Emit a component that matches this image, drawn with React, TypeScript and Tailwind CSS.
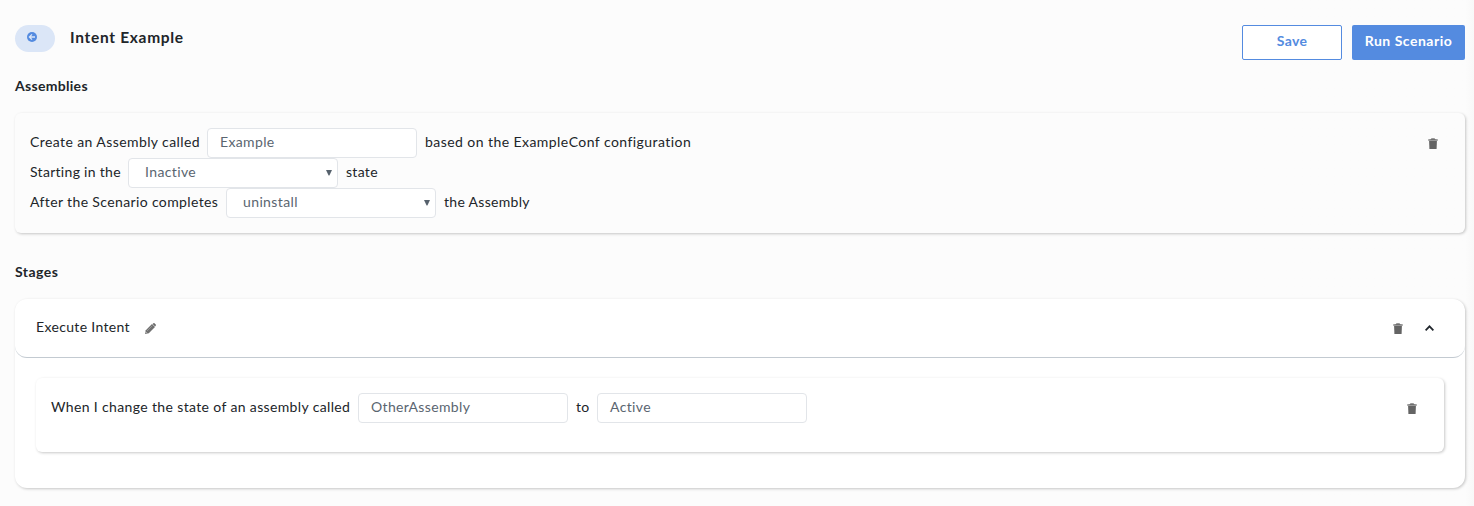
import React from "react";

function Trash() {
  return (
    <svg width="10" height="11" viewBox="0 0 10 11" className="block shrink-0">
      <path d="M3.2 0.2h3.6v1H3.2z" fill="#808080" />
      <path d="M0.3 1h9.4v2H0.3z" fill="#999999" />
      <path d="M2.5 1h5v.8h-5z" fill="#666666" />
      <path d="M1.1 3h7.8l-.3 8H1.4z" fill="#646464" />
    </svg>
  );
}

function Field({ value }: { value: string }) {
  return (
    <div className="mx-2 flex h-[30px] w-[210px] shrink-0 items-center rounded-[4px] border border-[#e2e5e9] bg-white px-3 pb-[3px] tracking-[0.36px] text-[#5a6570]">
      {value}
    </div>
  );
}

function Select({ value }: { value: string }) {
  return (
    <div className="mx-2 flex h-[30px] w-[210px] shrink-0 items-center justify-between rounded-[4px] border border-[#e2e5e9] bg-white pr-[5px] pl-4 text-[#5a6570]">
      <span className="pb-[3px] tracking-[0.38px]">{value}</span>
      <svg width="6" height="6" viewBox="0 0 6 6">
        <path d="M0 0h6L3.4 5.5h-.8z" fill="#56616c" />
      </svg>
    </div>
  );
}

export default function App() {
  return (
    <div className="h-[506px] w-full bg-[#fcfcfc] bg-linear-to-r from-[#fcfcfc] from-[99.4%] to-[#f8f8f8] font-['Lato',sans-serif] text-[14px] leading-5 tracking-[0.3px] text-[#212529]">
      <main className="pt-[25px] pr-[9px] pl-[15px]">
        <header className="flex h-[35px] items-start">
          <button className="flex h-[27px] w-10 items-center rounded-full bg-[#dbe6f7] pb-[3px] pl-3">
            <svg width="10" height="10" viewBox="0 0 10 10">
              <circle cx="5" cy="5" r="5" fill="#548be0" />
              <path d="M8 5H2.5M5 2.4L2.4 5L5 7.6" fill="none" stroke="#dbe6f7" strokeWidth="1.3" />
            </svg>
          </button>
          <h1 className="ml-[15px] pt-[2px] text-[15.5px] font-bold tracking-[0.7px] whitespace-nowrap">Intent Example</h1>
          <div className="ml-auto flex gap-[10px] font-bold">
            <button className="h-[35px] w-[100px] rounded-[2px] border border-[#548be0] bg-white pb-[4px] text-[#548be0]">Save</button>
            <button className="h-[35px] w-[113px] rounded-[2px] bg-[#548be0] pb-[4px] tracking-[0.5px] whitespace-nowrap text-white">Run Scenario</button>
          </div>
        </header>
        <h2 className="mt-4 h-5 text-[14px] font-bold">Assemblies</h2>
        <section className="mt-[17px] flex h-[120px] justify-between rounded-[6px] px-[15px] pt-[15px] shadow-[1px_1px_3px_rgba(0,0,0,0.22)]">
          <div className="whitespace-nowrap">
            <div className="flex h-[30px] items-center">
              <span className="w-[169px] pb-[3px] tracking-[0.41px]">Create an Assembly called</span>
              <Field value="Example" />
              <span className="pb-[3px] tracking-[0.44px]">based on the ExampleConf configuration</span>
            </div>
            <div className="flex h-[30px] items-center">
              <span className="w-[90px] pb-[3px] tracking-[0.3px]">Starting in the</span>
              <Select value="Inactive" />
              <span className="pb-[3px]">state</span>
            </div>
            <div className="flex h-[30px] items-center">
              <span className="w-[188px] pb-[3px] tracking-[0.37px]">After the Scenario completes</span>
              <Select value="uninstall" />
              <span className="pb-[3px] tracking-[0.3px]">the Assembly</span>
            </div>
          </div>
          <div className="pt-[10px] pr-[12px]"><Trash /></div>
        </section>
        <h2 className="mt-[29px] h-5 text-[14px] font-bold tracking-[0.45px]">Stages</h2>
        <section className="mt-[17px] h-[189px] rounded-[12px] bg-white shadow-[1px_1px_3px_rgba(0,0,0,0.22)]">
          <div className="flex h-[59px] items-center rounded-[12px] border-b border-[#c3cad1] pr-[31px] pl-[21px]">
            <span className="w-[94px] pb-[3px] tracking-[0.34px] whitespace-nowrap">Execute Intent</span>
            <svg width="11" height="11" viewBox="0 0 11 11" className="ml-[15px]">
              <path d="M0 11L.8 7.2L7 1L10 4L3.8 10.2z" fill="#707070" />
              <path d="M7.6 .9L8.4 .2Q9 -.2 9.5.3L10.7 1.5Q11.2 2 10.8 2.6L10.1 3.4z" fill="#686868" />
              <path d="M2 8L7.2 2.8" stroke="#a6a6a6" strokeWidth=".7" />
              <path d="M.9 9.2L1.8 10.1" stroke="#ffffff" strokeWidth=".7" />
            </svg>
            <div className="ml-auto flex items-center gap-[22px]">
              <Trash />
              <svg width="9" height="6" viewBox="0 0 9 6"><path d="M.6 5.3L4.5 1.3L8.4 5.3" fill="none" stroke="#20262c" strokeWidth="1.8" /></svg>
            </div>
          </div>
          <div className="mt-5 mr-[21px] ml-[21px] flex h-[74px] justify-between rounded-[6px] px-[15px] pt-[15px] shadow-[1px_1px_3px_rgba(0,0,0,0.22)]">
            <div className="flex h-[30px] items-center whitespace-nowrap">
              <span className="w-[299px] pb-[3px] tracking-[0.36px]">When I change the state of an assembly called</span>
              <Field value="OtherAssembly" />
              <span className="w-[13px] pb-[3px]">to</span>
              <Field value="Active" />
            </div>
            <div className="pt-[10px] pr-[12px]"><Trash /></div>
          </div>
        </section>
      </main>
    </div>
  );
}
